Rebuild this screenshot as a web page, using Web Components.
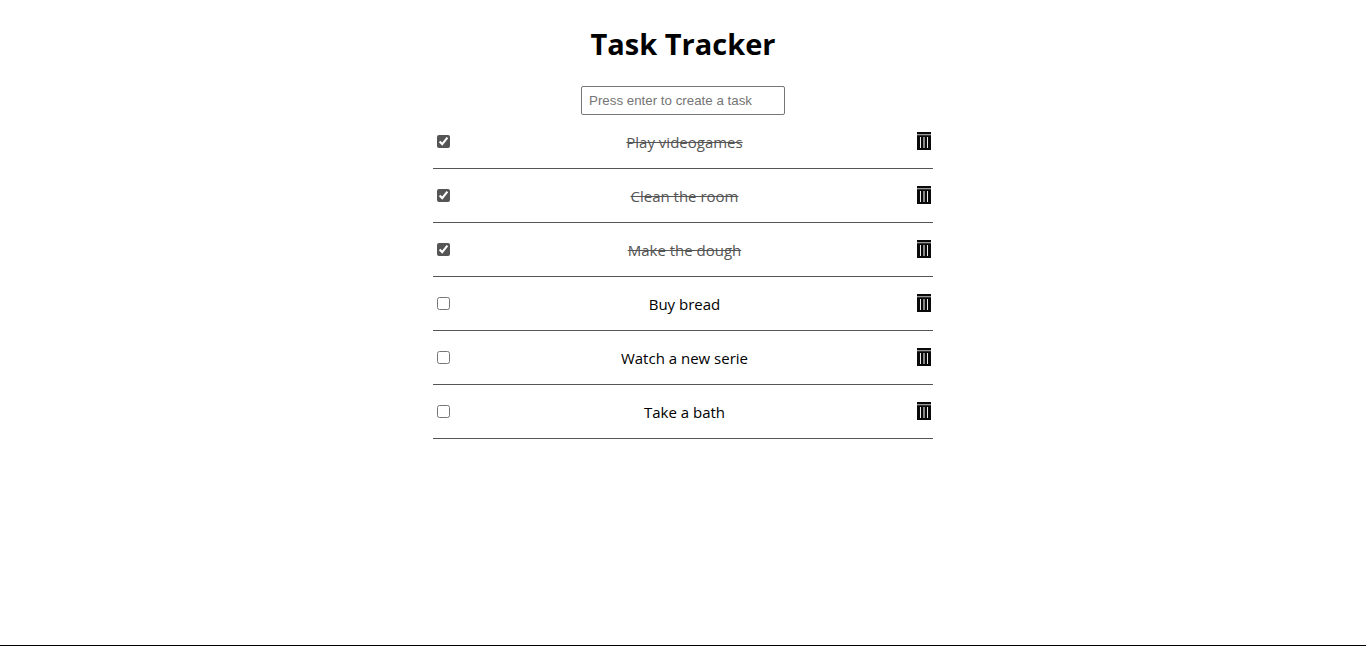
<!DOCTYPE html>
<html lang="en">
<head>
<meta charset="utf-8">
<meta name="viewport" content="width=device-width, initial-scale=1">
<title>Task Tracker</title>
<style>
  body { margin: 0; background: #fff; color: #000; font: 15px/24px "Segoe UI", "Open Sans", "Noto Sans", sans-serif; }
</style>
</head>
<body>
<task-app>
  <span slot="title">Task Tracker</span>
  <task-input label="Press enter to create a task"></task-input>
  <task-list>
    <task-item done>Play videogames</task-item>
    <task-item done>Clean the room</task-item>
    <task-item done>Make the dough</task-item>
    <task-item>Buy bread</task-item>
    <task-item>Watch a new serie</task-item>
    <task-item>Take a bath</task-item>
  </task-list>
</task-app>

<template id="app-template">
  <style>
    :host { display: block; box-sizing: border-box; min-height: 100vh; border-bottom: 1px solid #000; padding: 22px 16px; }
    main { display: flex; flex-direction: column; align-items: center; }
    h1 { margin: 0 0 20px; font-size: 29px; line-height: 44px; font-weight: 700; text-align: center; }
    ::slotted(task-list) { width: 100%; max-width: 500px; }
  </style>
  <main>
    <h1><slot name="title"></slot></h1>
    <slot></slot>
  </main>
</template>

<template id="input-template">
  <style>
    :host { display: block; }
    input { display: block; box-sizing: border-box; width: 204px; height: 29px; margin: 0; padding: 0 7px; border: 1px solid #767676; border-radius: 2px; background: #fff; font-family: "Liberation Sans", Arial, sans-serif; }
    input::placeholder { color: #757575; }
  </style>
  <input type="text">
</template>

<template id="list-template">
  <style>:host { display: block; }</style>
  <slot></slot>
</template>

<template id="item-template">
  <style>
    :host { display: flex; align-items: center; box-sizing: border-box; height: 54px; border-bottom: 1px solid #555; }
    input { flex: none; width: 13px; height: 13px; margin: 0 4px; accent-color: #555; }
    label { flex: 1; text-align: center; }
    :host([done]) label { color: #555; text-decoration: line-through; }
    button { display: flex; flex: none; margin: 0; padding: 0 2px 2px; border: 0; background: none; cursor: pointer; }
    svg { display: block; width: 14px; height: 18px; }
  </style>
  <input type="checkbox" id="check">
  <label for="check"><slot></slot></label>
  <button type="button" aria-label="Delete task">
    <svg viewBox="0 0 14 18" aria-hidden="true" shape-rendering="crispEdges">
      <path fill="#0a0a0a" d="M0 0h14v18H0z"/>
      <path fill="#999" d="M0 2h14v1H0z"/>
      <path fill="#333" d="M0 3h14v1H0z"/>
      <path fill="#eee" d="M3 5h1v11H3zM10 5h1v11h-1z"/>
      <path fill="#888" d="M6 5h2v11H6z"/>
    </svg>
  </button>
</template>

<script>
  class TemplateElement extends HTMLElement {
    constructor() {
      super();
      const template = document.getElementById(this.constructor.template);
      this.attachShadow({ mode: "open" }).append(template.content.cloneNode(true));
    }
  }

  class TaskApp extends TemplateElement {
    static template = "app-template";
    connectedCallback() {
      this.addEventListener("task-create", (event) => {
        const item = document.createElement("task-item");
        item.textContent = event.detail;
        this.querySelector("task-list").append(item);
      });
    }
  }

  class TaskInput extends TemplateElement {
    static template = "input-template";
    connectedCallback() {
      const input = this.shadowRoot.querySelector("input");
      input.placeholder = this.getAttribute("label");
      input.setAttribute("aria-label", input.placeholder);
      input.addEventListener("keydown", (event) => {
        const text = input.value.trim();
        if (event.key !== "Enter" || !text) return;
        this.dispatchEvent(new CustomEvent("task-create", { detail: text, bubbles: true }));
        input.value = "";
      });
    }
  }

  class TaskList extends TemplateElement {
    static template = "list-template";
    connectedCallback() { this.setAttribute("role", "list"); }
  }

  class TaskItem extends TemplateElement {
    static template = "item-template";
    connectedCallback() {
      this.setAttribute("role", "listitem");
      const check = this.shadowRoot.querySelector("input");
      check.checked = this.hasAttribute("done");
      check.addEventListener("change", () => this.toggleAttribute("done", check.checked));
      this.shadowRoot.querySelector("button").addEventListener("click", () => this.remove());
    }
  }

  customElements.define("task-app", TaskApp);
  customElements.define("task-input", TaskInput);
  customElements.define("task-list", TaskList);
  customElements.define("task-item", TaskItem);
</script>
</body>
</html>
